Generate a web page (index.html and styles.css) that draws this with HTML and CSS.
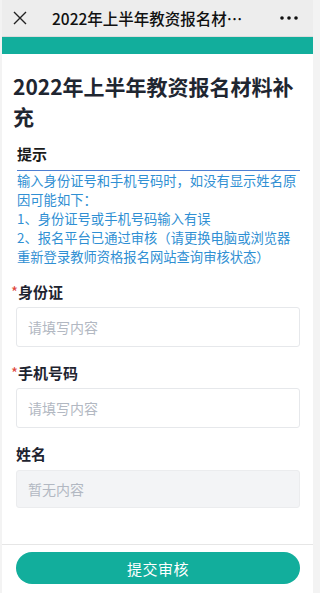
FILE: index.html
```html
<!DOCTYPE html>
<html lang="zh-CN">
<head>
<meta charset="utf-8">
<meta name="viewport" content="width=device-width, initial-scale=1">
<title>2022年上半年教资报名材料补充</title>
<link rel="stylesheet" href="styles.css">
</head>
<body>
<div class="page">
  <header class="topbar">
    <svg class="close" width="14" height="14" viewBox="0 0 14 14" aria-hidden="true">
      <path d="M1 1 L13 13 M13 1 L1 13" stroke="#222" stroke-width="1.4" fill="none"/>
    </svg>
    <div class="topbar-title">2022年上半年教资报名材…</div>
    <svg class="more" width="18" height="4" viewBox="0 0 18 4" aria-hidden="true">
      <circle cx="2" cy="2" r="1.8" fill="#111"/>
      <circle cx="9" cy="2" r="1.8" fill="#111"/>
      <circle cx="16" cy="2" r="1.8" fill="#111"/>
    </svg>
  </header>
  <div class="banner"></div>
  <main class="content">
    <h1 class="title">2022年上半年教资报名材料补充</h1>
    <div class="tip-head">提示</div>
    <p class="tip-text">输入身份证号和手机号码时，如没有显示姓名原因可能如下：<br>1、身份证号或手机号码输入有误<br>2、报名平台已通过审核（请更换电脑或浏览器重新登录教师资格报名网站查询审核状态）</p>

    <div class="field">
      <label class="label"><span class="req">*</span>身份证</label>
      <input class="input" type="text" placeholder="请填写内容">
    </div>
    <div class="field">
      <label class="label"><span class="req">*</span>手机号码</label>
      <input class="input" type="text" placeholder="请填写内容">
    </div>
    <div class="field">
      <label class="label plain">姓名</label>
      <input class="input disabled" type="text" placeholder="暂无内容" disabled>
    </div>
  </main>
  <footer class="footer">
    <button class="submit" type="button">提交审核</button>
  </footer>
</div>
</body>
</html>
```
FILE: styles.css
```css
* { box-sizing: border-box; }
html, body {
  margin: 0;
  padding: 0;
  background: #f3f3f3;
  font-family: "Noto Sans CJK SC", "Noto Sans", sans-serif;
}
.page {
  width: 311px;
  margin-left: 2px;
  min-height: 593px;
  background: #fff;
}
.topbar {
  height: 37px;
  background: #ededed;
  border-bottom: 1px solid #dcdcdc;
  display: flex;
  align-items: center;
  padding: 0 15px 0 11px;
}
.close { flex: none; }
.topbar-title {
  flex: 1;
  margin-left: 25px;
  font-size: 15.5px;
  font-weight: 500;
  color: #111;
  white-space: nowrap;
  overflow: hidden;
}
.more { flex: none; }
.banner {
  height: 17px;
  background: #12ae9c;
}
.content {
  padding: 17px 11px 0 14px;
}
.title {
  margin: 0 0 0 -3px;
  width: 286px;
  font-size: 21px;
  line-height: 30px;
  font-weight: 700;
  color: #1f2631;
}
.tip-head {
  margin: 13px 0 0 1px;
  width: 283px;
  font-size: 15px;
  font-weight: 700;
  line-height: 20px;
  color: #1b1b1b;
  padding-bottom: 6px;
  border-bottom: 1px solid #4d7fd3;
}
.tip-text {
  margin: 0 0 0 1px;
  width: 284px;
  font-size: 13.3px;
  line-height: 19px;
  color: #2f8fd3;
}
.field {
  margin-top: 16px;
}
.label {
  display: block;
  font-size: 15px;
  font-weight: 700;
  line-height: 20px;
  color: #1e2430;
  margin-left: -5px;
}
.label.plain { margin-left: 0; }
.req {
  color: #e0463c;
  font-weight: 400;
}
.input {
  display: block;
  width: 284px;
  height: 40px;
  margin-top: 5px;
  padding: 0 11px;
  border: 1px solid #e6e8eb;
  border-radius: 3px;
  font-family: inherit;
  font-size: 14px;
  color: #333;
  background: #fff;
  outline: none;
}
.input::placeholder { color: #b2b8c2; }
.input.disabled {
  height: 38px;
  margin-top: 6px;
  background: #f3f4f6;
  border-color: #ebecee;
}
.footer {
  margin-top: 36px;
  border-top: 1px solid #e6e6e6;
  padding: 7px 13px 8px 14px;
}
.submit {
  display: block;
  width: 284px;
  height: 32px;
  border: none;
  border-radius: 16px;
  background: #12ae9c;
  color: #fff;
  font-family: inherit;
  font-size: 15px;
  letter-spacing: 0.5px;
}
```
